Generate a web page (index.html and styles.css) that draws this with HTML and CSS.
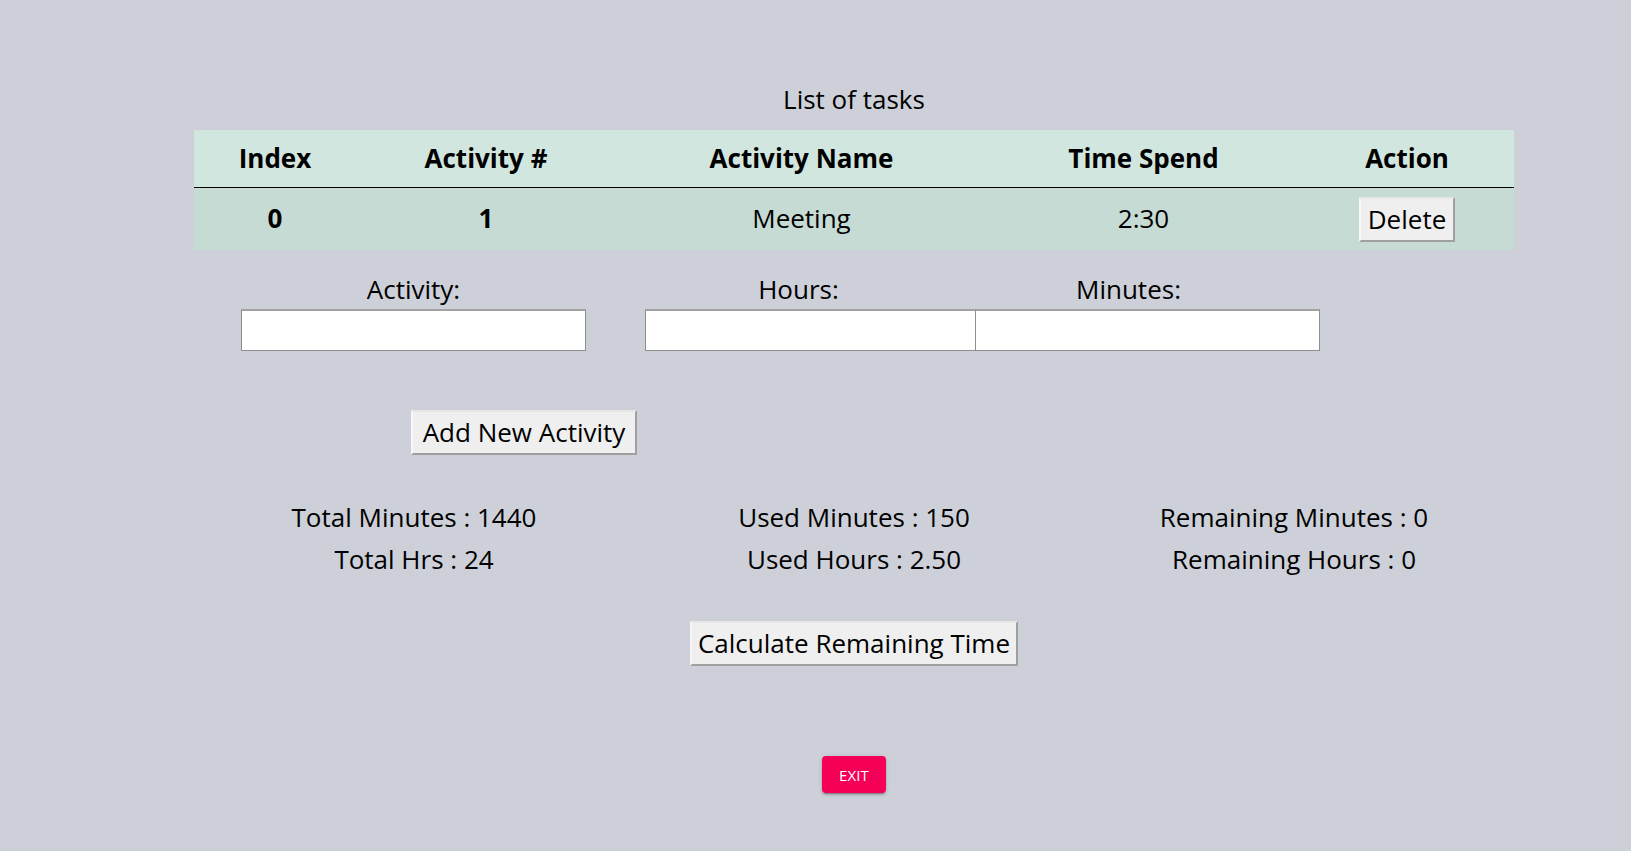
FILE: index.html
```html
<!DOCTYPE html>
<html lang="en">
<head>
<meta charset="utf-8">
<title>Tasks</title>
<link rel="stylesheet" href="styles.css">
</head>
<body>
<div class="page">
  <h2 class="title">List of tasks</h2>
  <table class="tasks">
    <colgroup>
      <col class="c1"><col class="c2"><col class="c3"><col class="c4"><col class="c5">
    </colgroup>
    <thead>
      <tr>
        <th>Index</th>
        <th>Activity #</th>
        <th>Activity Name</th>
        <th>Time Spend</th>
        <th>Action</th>
      </tr>
    </thead>
    <tbody>
      <tr>
        <th>0</th>
        <th>1</th>
        <td>Meeting</td>
        <td>2:30</td>
        <td><button class="btn btn-delete">Delete</button></td>
      </tr>
    </tbody>
  </table>

  <div class="fields">
    <div class="field f-activity">
      <label class="lbl">Activity:</label>
      <input class="inp" type="text">
    </div>
    <div class="field f-hours">
      <label class="lbl shifted">Hours:</label>
      <input class="inp" type="text">
    </div>
    <div class="field f-minutes">
      <label class="lbl shifted">Minutes:</label>
      <input class="inp" type="text">
    </div>
  </div>

  <div class="add-row">
    <button class="btn btn-add">Add New Activity</button>
  </div>

  <div class="stats">
    <div class="stat"><div>Total Minutes : 1440</div><div>Total Hrs : 24</div></div>
    <div class="stat"><div>Used Minutes : 150</div><div>Used Hours : 2.50</div></div>
    <div class="stat"><div>Remaining Minutes : 0</div><div>Remaining Hours : 0</div></div>
  </div>

  <div class="calc-row">
    <button class="btn btn-calc">Calculate Remaining Time</button>
  </div>

  <div class="exit-row">
    <button class="exit">EXIT</button>
  </div>
</div>
</body>
</html>
```

FILE: styles.css
```css
html, body {
  margin: 0;
  padding: 0;
  background: #cdd0d8;
}
body {
  font-family: "Open Sans", "Noto Sans", sans-serif;
  color: #000;
  height: 851px;
  overflow: hidden;
}
.page {
  width: 1320px;
  margin-left: 194px;
  padding-top: 81px;
}
.title {
  margin: 0;
  font-size: 26px;
  font-weight: 400;
  line-height: 36px;
  text-align: center;
}
.tasks {
  margin-top: 13px;
  width: 1320px;
  border-collapse: collapse;
  table-layout: fixed;
  font-size: 26px;
}
.c1 { width: 162px; }
.c2 { width: 260px; }
.c3 { width: 371px; }
.c4 { width: 313px; }
.c5 { width: 214px; }
.tasks thead tr {
  background: #d0e6de;
  height: 57px;
}
.tasks thead th {
  padding: 0;
  font-weight: 700;
  border-bottom: 1px solid #000;
  text-align: center;
  vertical-align: middle;
}
.tasks tbody tr {
  background: #c6dbd3;
  height: 63px;
}
.tasks tbody th,
.tasks tbody td {
  padding: 0 0 2px 0;
  text-align: center;
  vertical-align: middle;
}
.tasks tbody th { font-weight: 700; }

.btn {
  font-family: "Open Sans", "Noto Sans", sans-serif;
  font-size: 26px;
  color: #000;
  background: #efefef;
  border-style: solid;
  border-width: 2px;
  border-color: #e6e6e6 #a0a0a0 #a0a0a0 #f7f7f7;
  padding: 0 8px;
  line-height: 41px;
  height: 45px;
  cursor: pointer;
  vertical-align: middle;
}
.btn-delete {
  width: 96px;
  padding: 0;
  margin-top: 4px;
}

.fields {
  display: flex;
  margin-top: 20px;
  padding-left: 47px;
}
.field {
  display: flex;
  flex-direction: column;
  width: 345px;
  flex: none;
}
.f-hours { margin-left: 59px; }
.f-minutes { margin-left: -15px; position: relative; }
.lbl {
  font-size: 26px;
  line-height: 38px;
  text-align: center;
  height: 38px;
  margin-bottom: 1px;
}
.shifted { padding-right: 38px; }
.inp {
  box-sizing: border-box;
  width: 345px;
  height: 42px;
  margin: 0;
  background: #fff;
  border: 1px solid #8e8e8e;
  border-top: 2px solid #a2a2a2;
  font-size: 20px;
  padding: 0 4px;
}

.add-row {
  margin-top: 59px;
  padding-left: 217px;
}
.btn-add {
  width: 226px;
  padding: 0;
}

.stats {
  display: grid;
  grid-template-columns: repeat(3, 1fr);
  margin-top: 41px;
  font-size: 26px;
  line-height: 42px;
  text-align: center;
}

.calc-row {
  margin-top: 41px;
  text-align: center;
}
.btn-calc {
  width: 328px;
  padding: 0;
}

.exit-row {
  margin-top: 90px;
  text-align: center;
}
.exit {
  font-family: "Open Sans", "Noto Sans", sans-serif;
  background: #f50057;
  color: #fff;
  border: none;
  border-radius: 4px;
  min-width: 64px;
  height: 37px;
  padding: 0 16px;
  font-size: 15px;
  font-weight: 400;
  letter-spacing: 0.01em;
  box-shadow: 0 3px 1px -2px rgba(0,0,0,0.2), 0 2px 2px 0 rgba(0,0,0,0.14), 0 1px 5px 0 rgba(0,0,0,0.12);
  cursor: pointer;
}
```
